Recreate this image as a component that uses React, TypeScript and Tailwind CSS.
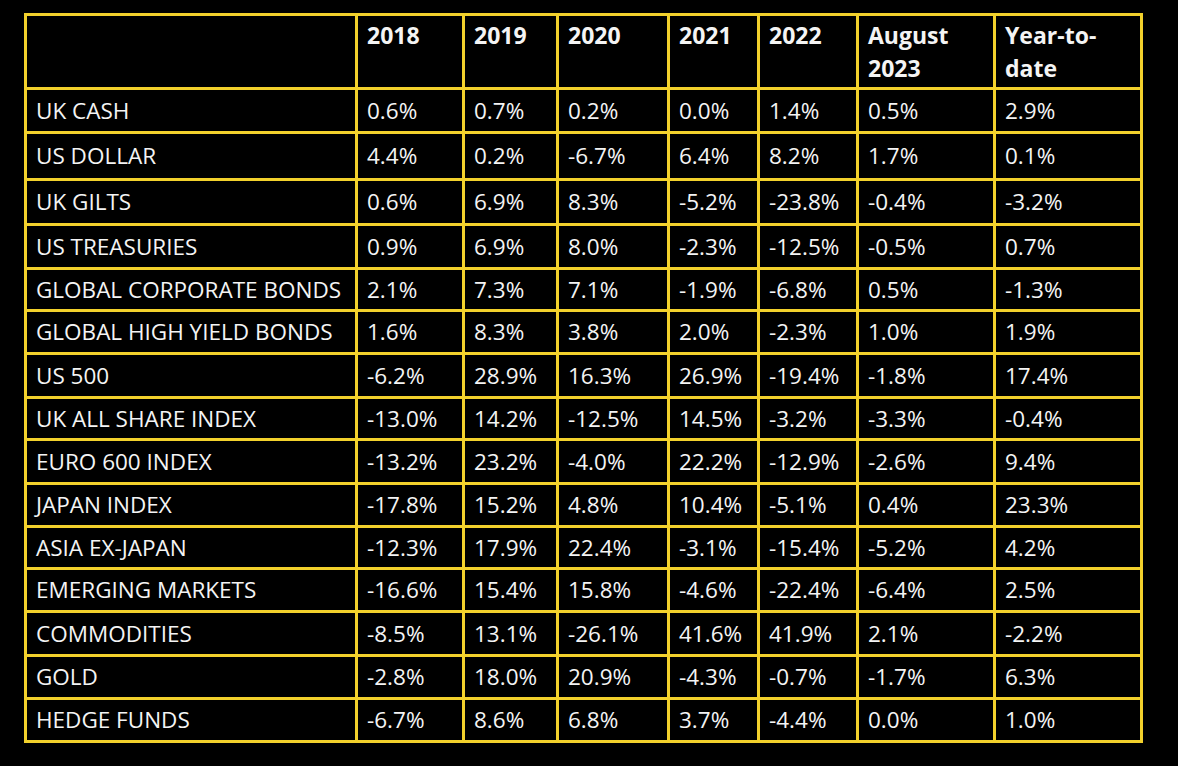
import React from 'react';

const headers: string[][] = [[], ['2018'], ['2019'], ['2020'], ['2021'], ['2022'], ['August', '2023'], ['Year-to-', 'date']];

const rows: [string, ...string[]][] = [
  ['UK CASH', '0.6%', '0.7%', '0.2%', '0.0%', '1.4%', '0.5%', '2.9%'],
  ['US DOLLAR', '4.4%', '0.2%', '-6.7%', '6.4%', '8.2%', '1.7%', '0.1%'],
  ['UK GILTS', '0.6%', '6.9%', '8.3%', '-5.2%', '-23.8%', '-0.4%', '-3.2%'],
  ['US TREASURIES', '0.9%', '6.9%', '8.0%', '-2.3%', '-12.5%', '-0.5%', '0.7%'],
  ['GLOBAL CORPORATE BONDS', '2.1%', '7.3%', '7.1%', '-1.9%', '-6.8%', '0.5%', '-1.3%'],
  ['GLOBAL HIGH YIELD BONDS', '1.6%', '8.3%', '3.8%', '2.0%', '-2.3%', '1.0%', '1.9%'],
  ['US 500', '-6.2%', '28.9%', '16.3%', '26.9%', '-19.4%', '-1.8%', '17.4%'],
  ['UK ALL SHARE INDEX', '-13.0%', '14.2%', '-12.5%', '14.5%', '-3.2%', '-3.3%', '-0.4%'],
  ['EURO 600 INDEX', '-13.2%', '23.2%', '-4.0%', '22.2%', '-12.9%', '-2.6%', '9.4%'],
  ['JAPAN INDEX', '-17.8%', '15.2%', '4.8%', '10.4%', '-5.1%', '0.4%', '23.3%'],
  ['ASIA EX-JAPAN', '-12.3%', '17.9%', '22.4%', '-3.1%', '-15.4%', '-5.2%', '4.2%'],
  ['EMERGING MARKETS', '-16.6%', '15.4%', '15.8%', '-4.6%', '-22.4%', '-6.4%', '2.5%'],
  ['COMMODITIES', '-8.5%', '13.1%', '-26.1%', '41.6%', '41.9%', '2.1%', '-2.2%'],
  ['GOLD', '-2.8%', '18.0%', '20.9%', '-4.3%', '-0.7%', '-1.7%', '6.3%'],
  ['HEDGE FUNDS', '-6.7%', '8.6%', '6.8%', '3.7%', '-4.4%', '0.0%', '1.0%'],
];

export default function App() {
  return (
    <div className="w-[1178px] h-[766px] bg-black pt-[13px] pl-[24px] font-['Open_Sans',sans-serif] text-[#f4f4f4]">
      <div className="grid w-fit gap-[3px] border-[3px] border-[#f2d12c] bg-[#f2d12c] grid-cols-[328px_104px_91px_108px_87px_96px_134px_144px] grid-rows-[71px_41px_44px_42px_41px_39px_40px_41px_39px_41px_40px_39px_40px_41px_40px_40px]">
        {headers.map((h, i) => (
          <div key={'h' + i} className="bg-black pl-[9px] pt-[3px] text-[23px] font-bold leading-[33px] whitespace-nowrap">
            {h.map(line => (
              <div key={line}>{line}</div>
            ))}
          </div>
        ))}
        {rows.map((r, ri) =>
          r.map((c, ci) => (
            <div key={ri + '-' + ci} className="bg-black pl-[9px] flex items-center text-[22.5px] whitespace-nowrap">
              {c}
            </div>
          ))
        )}
      </div>
    </div>
  );
}
